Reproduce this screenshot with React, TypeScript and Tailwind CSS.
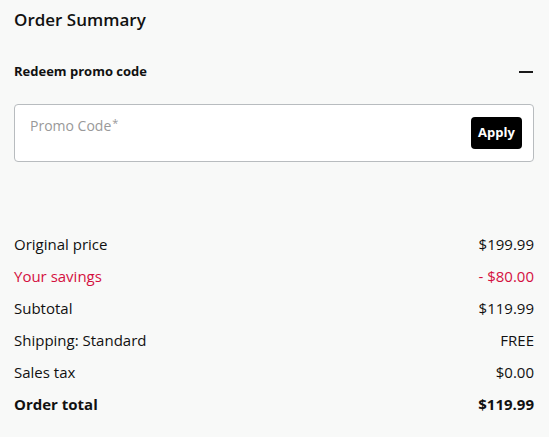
// Order summary panel with promo code field and price breakdown.

const rows = [
  { label: "Original price", value: "$199.99" },
  { label: "Your savings", value: "- $80.00", tone: "savings" },
  { label: "Subtotal", value: "$119.99" },
  { label: "Shipping: Standard", value: "FREE" },
  { label: "Sales tax", value: "$0.00" },
  { label: "Order total", value: "$119.99", tone: "total" },
];

export default function App() {
  return (
    <div
      className="min-h-[437px] w-[549px] bg-[#f8f9f8] pl-[14px] pr-[15px] pt-[9px] text-[#111]"
      style={{ fontFamily: '"Open Sans", "Liberation Sans", sans-serif' }}
    >
      <h2 className="text-[17px] font-semibold leading-[22px]">Order Summary</h2>

      <div className="mt-[30px] flex h-[22px] items-center justify-between">
        <span className="text-[13px] font-bold">Redeem promo code</span>
        <span className="mr-[1px] h-[2px] w-[14px] bg-[#1a1a1a]" aria-hidden />
      </div>

      <div className="mt-[21px] flex h-[58px] items-start justify-between rounded-[4px] border border-[#b8bcbf] bg-white pl-[15px] pr-[11px]">
        <span className="mt-[10px] text-[14px] text-[#999]">
          Promo Code<span className="ml-[1px] text-[11px] align-top">*</span>
        </span>
        <button className="mt-[12px] h-[32px] w-[51px] rounded-[4px] bg-black text-[13px] font-bold text-white">
          Apply
        </button>
      </div>

      <div className="mt-[66px] flex flex-col">
        {rows.map((row) => (
          <div
            key={row.label}
            className={[
              "flex h-[32px] items-center justify-between text-[15px]",
              row.tone === "savings" ? "text-[#d4103f]" : "",
              row.tone === "total" ? "font-bold" : "",
            ].join(" ")}
          >
            <span>{row.label}</span>
            <span>{row.value}</span>
          </div>
        ))}
      </div>
    </div>
  );
}
